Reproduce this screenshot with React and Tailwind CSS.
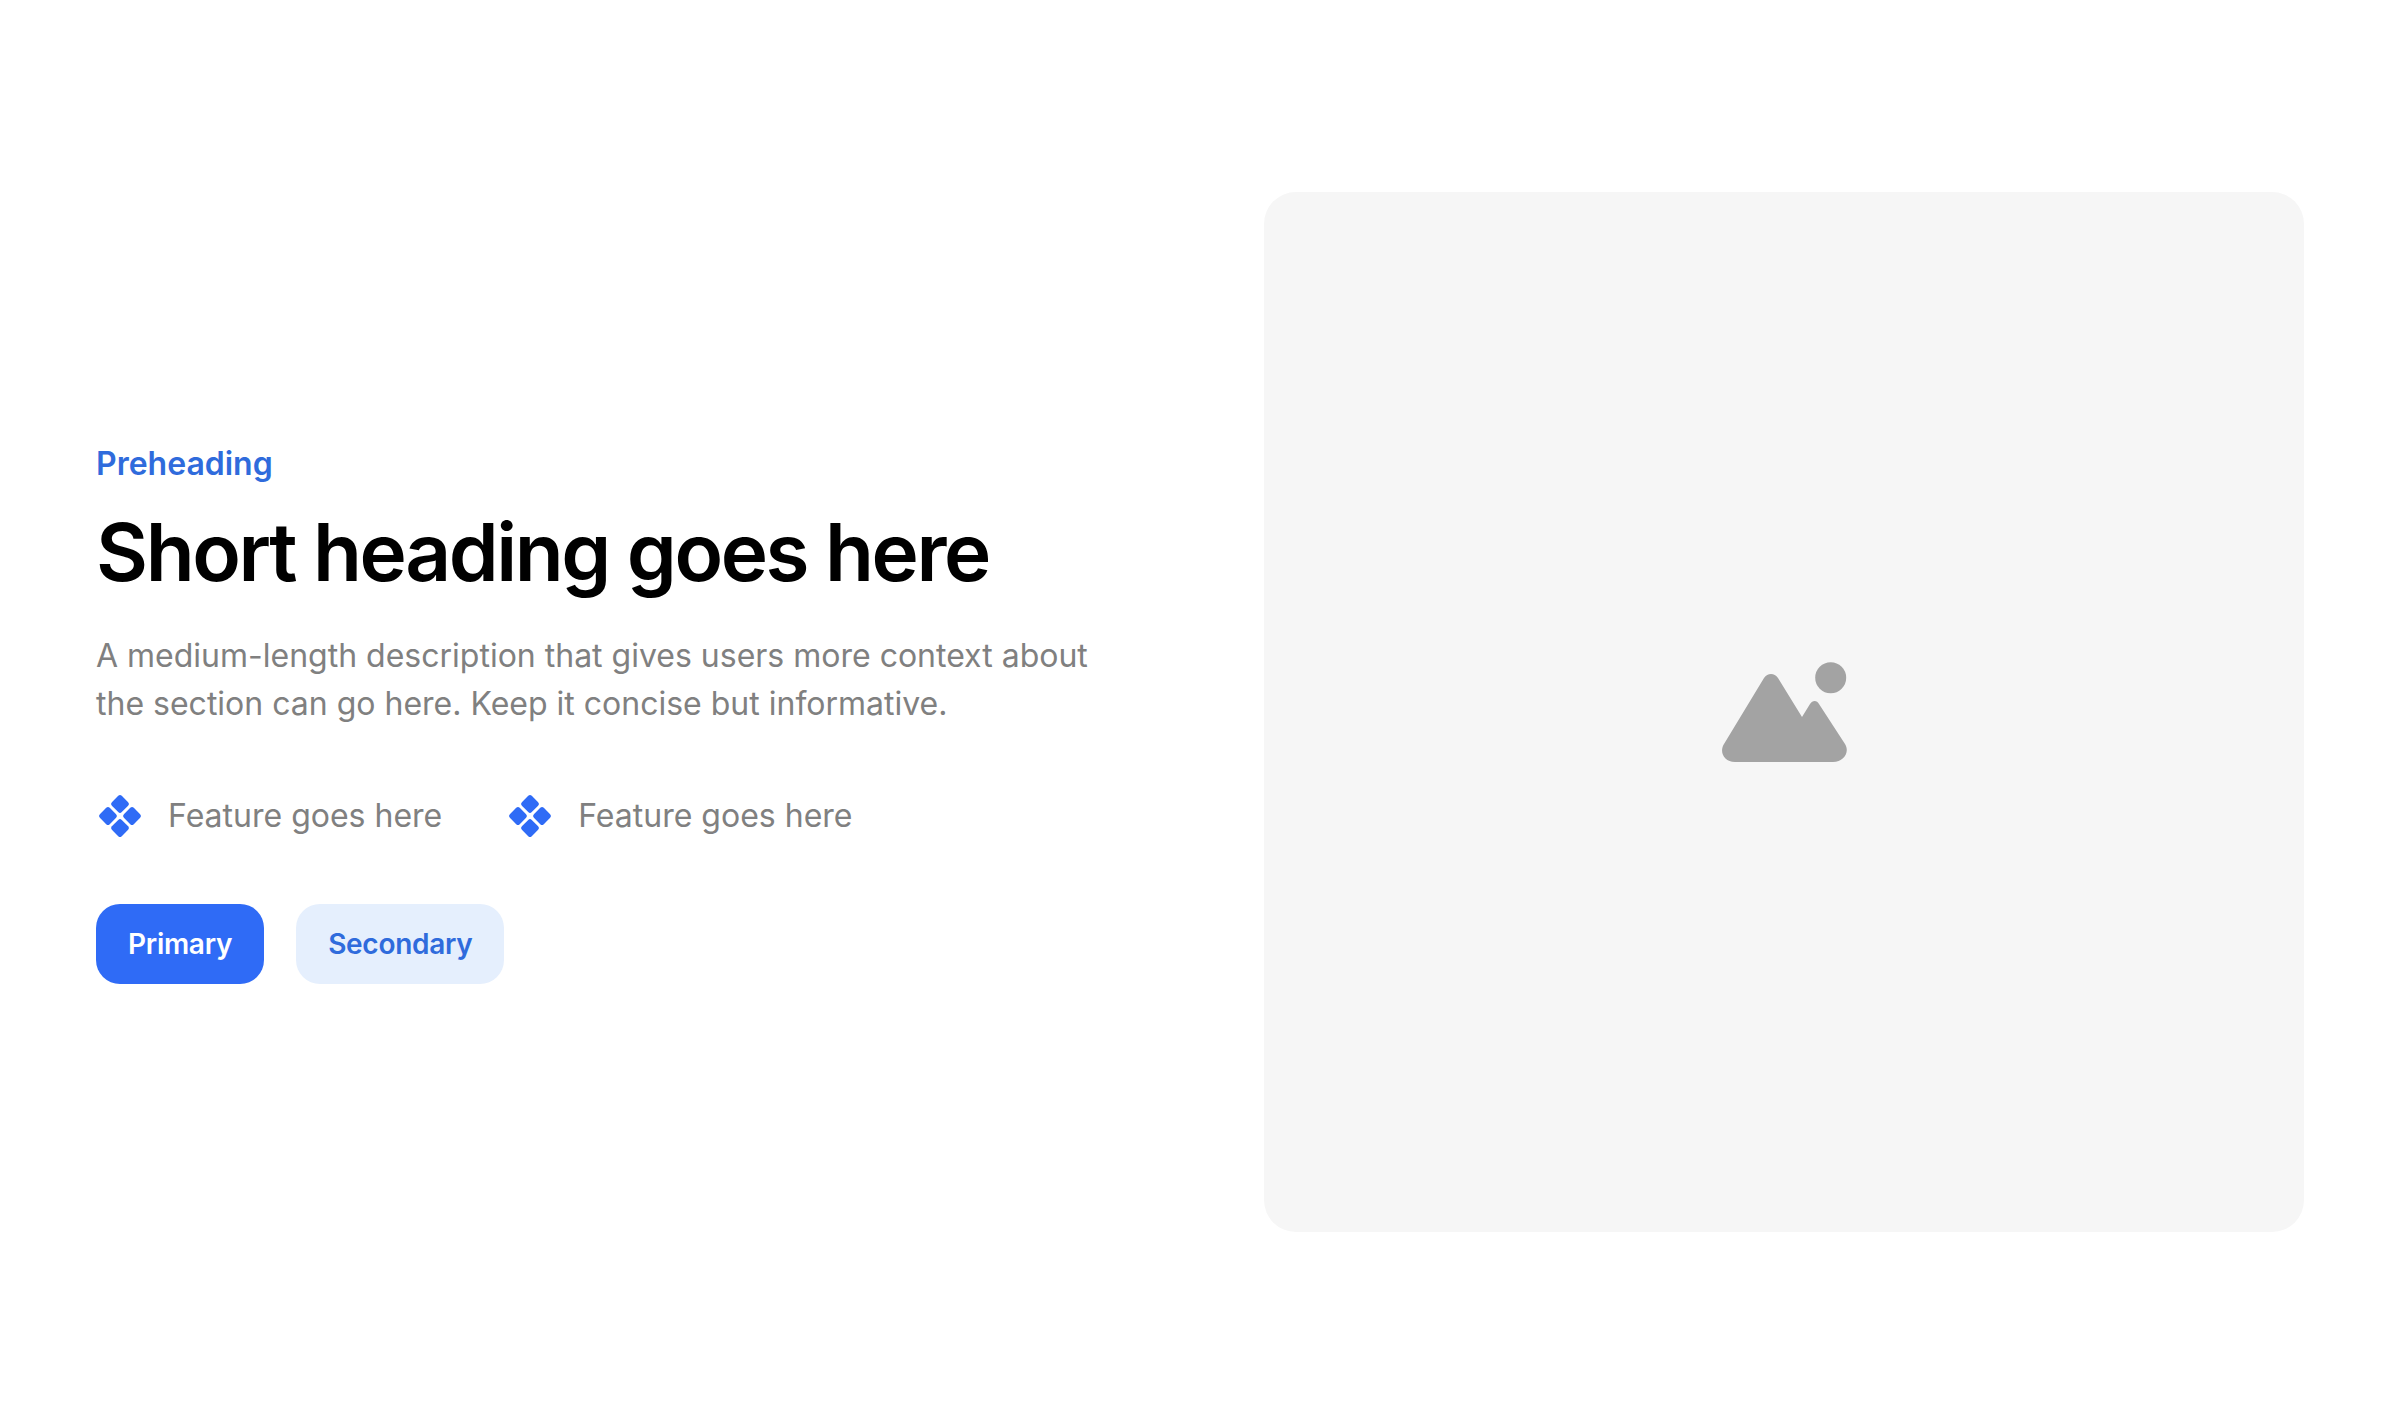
const Diamonds = () => (
  <svg className="w-12 h-12 shrink-0" viewBox="0 0 48 48" fill="#2f6bf6">
    <g transform="rotate(45 24 24)">
      <rect x="8.5" y="8.5" width="14" height="14" rx="2.5" />
      <rect x="25.5" y="8.5" width="14" height="14" rx="2.5" />
      <rect x="8.5" y="25.5" width="14" height="14" rx="2.5" />
      <rect x="25.5" y="25.5" width="14" height="14" rx="2.5" />
    </g>
  </svg>
);

const Mountains = () => (
  <svg className="w-[128px] h-[104px]" viewBox="0 0 128 104" fill="#a3a3a3">
    <circle cx="110.7" cy="17.7" r="15.5" />
    <path d="M44 18 C47.5 12.5 54.5 12.5 58 18 L82 57 L90 44 C92.5 40 97 40 99 44 L125 84 C130 92 124 102 113 102 L15 102 C4 102 -1 92 4 84 Z" />
  </svg>
);

const Feature = () => (
  <div className="flex items-center gap-6">
    <Diamonds />
    <span className="text-[32px] leading-[48px] text-[#808080]">Feature goes here</span>
  </div>
);

export default function App() {
  return (
    <div className="flex gap-[128px] py-[192px] px-24 bg-white min-h-[1424px] font-['Inter',sans-serif]">
      <div className="w-[1040px] flex flex-col justify-center items-start">
        <div className="text-[32px] leading-[48px] font-semibold text-[#2f6bdc]">Preheading</div>
        <h1 className="mt-4 text-[80px] leading-[96px] font-semibold text-black tracking-[-0.03em]">Short heading goes here</h1>
        <p className="mt-8 text-[32px] leading-[48px] text-[#808080]">
          A medium-length description that gives users more context about the section can go here. Keep it concise but informative.
        </p>
        <div className="mt-16 flex gap-16">
          <Feature />
          <Feature />
        </div>
        <div className="mt-16 flex gap-8">
          <button className="h-20 px-8 rounded-3xl bg-[#2f6bf6] text-white text-[28px] font-semibold tracking-[-0.01em]">Primary</button>
          <button className="h-20 px-8 rounded-3xl bg-[#e5effd] text-[#2f6bdc] text-[28px] font-semibold tracking-[-0.01em]">Secondary</button>
        </div>
      </div>
      <div className="w-[1040px] h-[1040px] rounded-[32px] bg-[#f6f6f6] flex items-center justify-center">
        <Mountains />
      </div>
    </div>
  );
}
